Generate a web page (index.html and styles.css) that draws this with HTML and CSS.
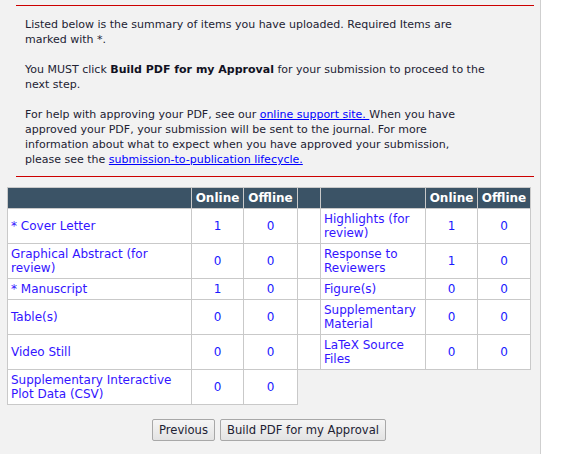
FILE: index.html
```html
<!DOCTYPE html>
<html>
<head>
<meta charset="utf-8">
<link rel="stylesheet" href="styles.css">
</head>
<body>
<div class="page">
  <div class="intro">
    <p>Listed below is the summary of items you have uploaded. Required Items are marked with *.</p>
    <p>You MUST click <b>Build PDF for my Approval</b> for your submission to proceed to the next step.</p>
    <p>For help with approving your PDF, see our <a href="#">online support site. </a>When you have approved your PDF, your submission will be sent to the journal. For more information about what to expect when you have approved your submission, please see the <a href="#">submission-to-publication lifecycle.</a></p>
  </div>
  <table class="items">
    <colgroup>
      <col class="c-name"><col class="c-on"><col class="c-off"><col class="c-gap"><col class="c-name2"><col class="c-on"><col class="c-off2">
    </colgroup>
    <thead>
      <tr><th></th><th>Online</th><th>Offline</th><th></th><th></th><th>Online</th><th>Offline</th></tr>
    </thead>
    <tbody>
      <tr><td class="name">* Cover Letter</td><td class="num">1</td><td class="num">0</td><td></td><td class="name">Highlights (for review)</td><td class="num">1</td><td class="num">0</td></tr>
      <tr><td class="name">Graphical Abstract (for review)</td><td class="num">0</td><td class="num">0</td><td></td><td class="name">Response to Reviewers</td><td class="num">1</td><td class="num">0</td></tr>
      <tr><td class="name">* Manuscript</td><td class="num">1</td><td class="num">0</td><td></td><td class="name">Figure(s)</td><td class="num">0</td><td class="num">0</td></tr>
      <tr><td class="name">Table(s)</td><td class="num">0</td><td class="num">0</td><td></td><td class="name">Supplementary Material</td><td class="num">0</td><td class="num">0</td></tr>
      <tr><td class="name">Video Still</td><td class="num">0</td><td class="num">0</td><td></td><td class="name">LaTeX Source Files</td><td class="num">0</td><td class="num">0</td></tr>
      <tr><td class="name">Supplementary Interactive Plot Data (CSV)</td><td class="num">0</td><td class="num">0</td></tr>
    </tbody>
  </table>
  <div class="actions">
    <button type="button" class="btn">Previous</button>
    <button type="button" class="btn">Build PDF for my Approval</button>
  </div>
</div>
</body>
</html>
```

FILE: styles.css
```css
html, body {
  margin: 0;
  padding: 0;
  background: #ffffff;
}

body {
  font-family: "DejaVu Sans", Verdana, sans-serif;
  color: #222233;
}

.page {
  width: 541px;
  min-height: 454px;
  box-sizing: border-box;
  background: #f2f2f2;
  border-right: 1px solid #cfcfcf;
  padding: 5px 0 0 7px;
}

.intro {
  margin: 0 6px 0 9px;
  border-top: 1px solid #cc0000;
  border-bottom: 1px solid #cc0000;
  padding: 11px 9px 9px 9px;
  font-size: 11px;
  line-height: 15px;
}

.intro p {
  margin: 0 0 15px 0;
  max-width: 461px;
}

.intro p:last-child {
  margin-bottom: 0;
}

.intro b {
  color: #111122;
}

.intro a {
  color: #0000ff;
  text-decoration: underline;
}

.items {
  margin-top: 10px;
  width: 524px;
  table-layout: fixed;
  border-collapse: collapse;
  font-size: 12px;
  line-height: 14px;
}

.c-name { width: 184px; }
.c-on { width: 52px; }
.c-off { width: 54px; }
.c-gap { width: 23px; }
.c-name2 { width: 105px; }
.c-off2 { width: 53px; }

.items th,
.items td {
  border: 1px solid #c9c9c9;
  padding: 3px;
  vertical-align: middle;
}

.items th {
  background: #3b5366;
  color: #ffffff;
  font-weight: bold;
  text-align: center;
}

.items td {
  background: #ffffff;
}

.items td.name {
  color: #3314ff;
  text-align: left;
}

.items td.num {
  color: #1a1aff;
  text-align: center;
}

.actions {
  width: 524px;
  margin-top: 14px;
  display: flex;
  justify-content: center;
  gap: 5px;
}

.btn {
  font-family: "DejaVu Sans", Verdana, sans-serif;
  font-size: 11.6px;
  height: 22px;
  padding: 0 6px;
  border: 1px solid #a8a8a8;
  border-radius: 2px;
  background: linear-gradient(#f5f5f5, #e3e3e3);
  color: #222233;
}
```
